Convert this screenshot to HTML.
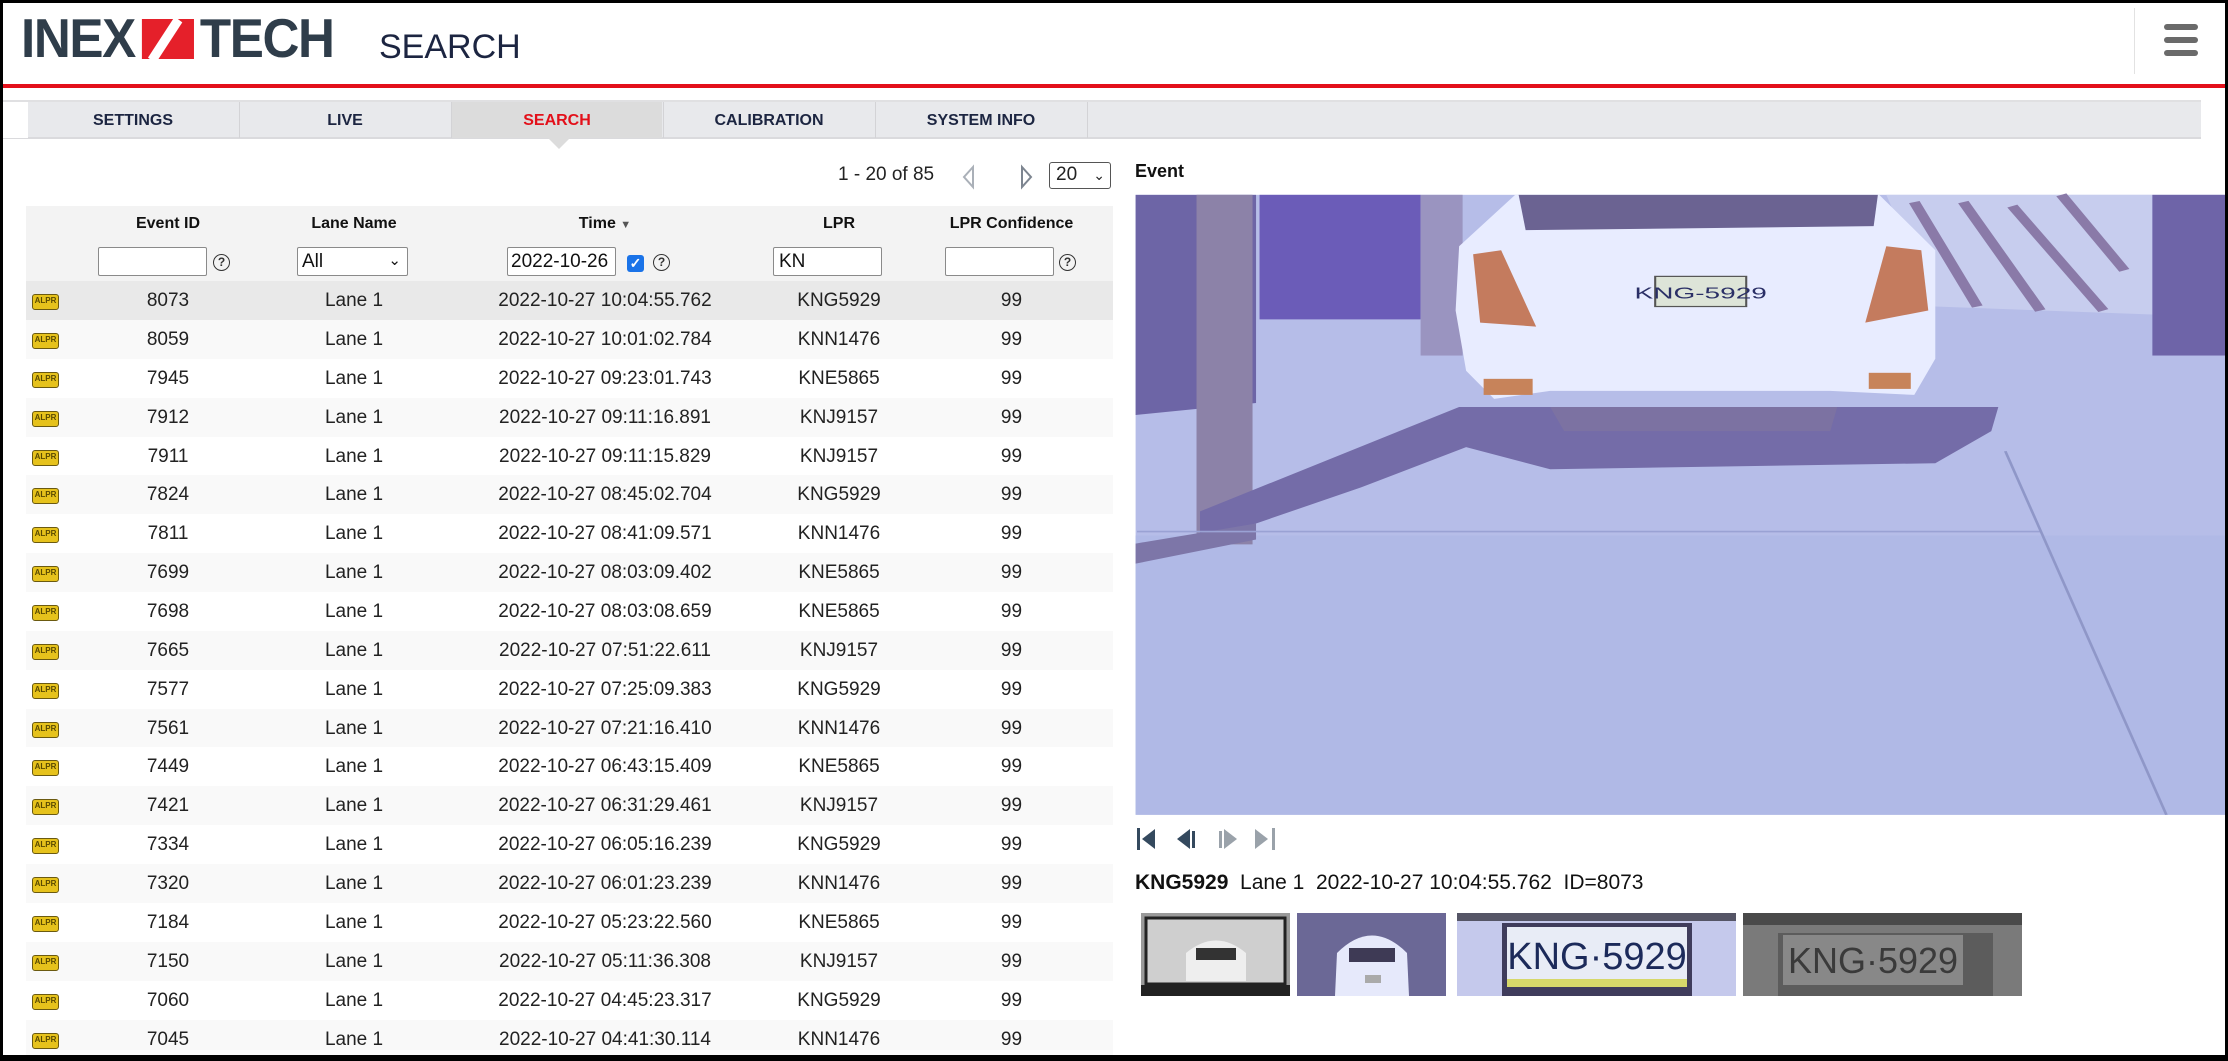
<!DOCTYPE html>
<html><head><meta charset="utf-8">
<style>
*{margin:0;padding:0;box-sizing:border-box}
body{width:2228px;height:1061px;position:relative;overflow:hidden;background:#000;font-family:"Liberation Sans",Arial,sans-serif;color:#222}
#page{position:absolute;left:3px;top:3px;width:2222px;height:1052px;background:#fff;overflow:hidden}
.a{position:absolute}
.tab{position:absolute;top:99px;height:36px;width:210px;line-height:38px;text-align:center;font-weight:bold;font-size:16px;color:#1c2541}
.hdr{position:absolute;top:212px;font-weight:bold;font-size:16px;color:#111;text-align:center}
.inp{position:absolute;top:244px;height:29px;border:1px solid #8a8a8a;border-radius:2px;background:#fff;font-size:19px;line-height:27px;padding-left:5px;color:#111}
.q{position:absolute;top:251px;width:17px;height:17px;border:1.5px solid #333;border-radius:50%;font-size:12px;line-height:14px;text-align:center;font-weight:bold;color:#333}
.row{position:absolute;left:23px;width:1087px;height:39px;font-size:19px;line-height:40px;color:#222}
.row span{position:absolute;top:0;text-align:center}
.ic{position:absolute;left:6px;top:13px;width:27px;height:16px;background:#e6c21c;border:1.5px solid #6b5a10;border-radius:3px;font-size:8px;line-height:12px;color:#5a4a00;font-weight:bold;text-align:center}
.c1{left:41px;width:202px}.c2{left:243px;width:170px}.c3{left:413px;width:332px}.c4{left:745px;width:136px}.c5{left:881px;width:209px}
</style></head><body>
<div id="page">
<div class="a" style="left:18px;top:7px;height:56px;font-weight:bold;font-size:55px;line-height:56px;color:#2f3d4a;letter-spacing:-1.5px;transform:scaleX(.93);transform-origin:left;white-space:nowrap">INEX<span style="display:inline-block;width:56px;height:40px;background:#e5202a;vertical-align:-2px;margin:0 6px 0 8px;position:relative;overflow:hidden"><span style="position:absolute;left:20px;top:-4px;width:10px;height:50px;background:#fff;transform:rotate(35deg)"></span></span>TECH</div>
<div class="a" style="left:376px;top:25px;font-size:34px;color:#1c2541;">SEARCH</div>
<div class="a" style="left:2131px;top:5px;width:1px;height:66px;background:#e2e2e2"></div>
<div class="a" style="left:2161px;top:21px;width:34px;height:6px;background:#6a6a6a;border-radius:3px"></div>
<div class="a" style="left:2161px;top:34px;width:34px;height:6px;background:#6a6a6a;border-radius:3px"></div>
<div class="a" style="left:2161px;top:47px;width:34px;height:6px;background:#6a6a6a;border-radius:3px"></div>
<div class="a" style="left:0;top:81px;width:2222px;height:4px;background:#e3101a"></div>
<div class="a" style="left:0;top:97px;width:2198px;height:39px;background:#e8e9ec;border-top:2px solid #e0e0e2;border-bottom:2px solid #dadadd"></div>
<div class="a" style="left:0;top:99px;width:25px;height:36px;background:#fff"></div>
<div class="tab" style="left:25px">SETTINGS</div>
<div class="a" style="left:236px;top:99px;width:1px;height:36px;background:#d3d3d6"></div>
<div class="tab" style="left:237px">LIVE</div>
<div class="a" style="left:448px;top:99px;width:1px;height:36px;background:#d3d3d6"></div>
<div class="tab" style="left:449px;background:#dcdcdc;color:#e3101a">SEARCH</div>
<div class="a" style="left:545px;top:135px;width:0;height:0;border-left:11px solid transparent;border-right:11px solid transparent;border-top:11px solid #dcdcdc"></div>
<div class="a" style="left:660px;top:99px;width:1px;height:36px;background:#d3d3d6"></div>
<div class="tab" style="left:661px">CALIBRATION</div>
<div class="a" style="left:872px;top:99px;width:1px;height:36px;background:#d3d3d6"></div>
<div class="tab" style="left:873px">SYSTEM INFO</div>
<div class="a" style="left:1084px;top:99px;width:1px;height:36px;background:#d3d3d6"></div>
<div class="a" style="left:835px;top:161px;font-size:19px;color:#222">1 - 20 of 85</div>
<svg class="a" style="left:955px;top:160px" width="80" height="28"><path d="M15 4 L6 14 L15 24 Z" fill="#fff" stroke="#aab0b8" stroke-width="2"/><path d="M64 4 L73 14 L64 24 Z" fill="#fff" stroke="#7d8590" stroke-width="2"/></svg>
<div class="a" style="left:1046px;top:159px;width:62px;height:27px;border:1.5px solid #555;border-radius:3px;font-size:19px;line-height:24px;padding-left:6px">20<span style="position:absolute;right:5px;top:0;font-size:14px">&#8964;</span></div>
<div class="a" style="left:23px;top:203px;width:1087px;height:78px;background:#f3f3f3"></div>
<div class="hdr" style="left:64px;width:202px">Event ID</div>
<div class="hdr" style="left:266px;width:170px">Lane Name</div>
<div class="hdr" style="left:436px;width:332px">Time <span style="font-size:11px;color:#555">&#9660;</span></div>
<div class="hdr" style="left:768px;width:136px">LPR</div>
<div class="hdr" style="left:904px;width:209px">LPR Confidence</div>
<div class="inp" style="left:95px;width:109px"></div><div class="q" style="left:210px">?</div>
<div class="inp" style="left:294px;width:111px;padding-left:4px">All<span style="position:absolute;right:6px;top:-1px;font-size:15px">&#8964;</span></div>
<div class="inp" style="left:504px;width:109px;padding-left:3px">2022-10-26</div>
<div class="a" style="left:624px;top:252px;width:17px;height:17px;background:#1a73e8;border-radius:3px;color:#fff;font-size:14px;line-height:17px;text-align:center;font-weight:bold">&#10003;</div>
<div class="q" style="left:650px">?</div>
<div class="inp" style="left:770px;width:109px">KN</div>
<div class="inp" style="left:942px;width:109px"></div><div class="q" style="left:1056px">?</div>
<div id="rows"></div>
<div class="a" style="left:1132px;top:158px;font-weight:bold;font-size:18px;color:#111">Event</div>
<svg class="a" style="left:1127px;top:187px" width="1098" height="630" viewBox="0 0 1568 1568" preserveAspectRatio="none">
<rect x="8" y="12" width="1560" height="1543" fill="#b6bde8"/>
<rect x="8" y="860" width="1560" height="695" fill="#b0b9e6"/>
<polygon points="8,12 180,12 180,530 8,560" fill="#6d65a6"/>
<rect x="185" y="12" width="230" height="310" fill="#6b5cb8"/>
<rect x="95" y="12" width="80" height="870" fill="#8c82a8"/>
<rect x="415" y="12" width="60" height="400" fill="#9a94c0"/>
<polygon points="100,800 470,540 1240,540 1230,600 1150,680 600,695 480,640 330,740 180,830 100,870" fill="#746ca8"/>
<polygon points="8,880 180,830 180,870 8,930" fill="#7d76a8"/>
<polygon points="1080,12 1460,12 1460,310 1150,290" fill="#c7cdee"/>
<g stroke="#8a7aa8" stroke-width="16"><line x1="1120" y1="30" x2="1210" y2="290"/><line x1="1190" y1="30" x2="1300" y2="300"/><line x1="1260" y1="40" x2="1390" y2="300"/><line x1="1330" y1="12" x2="1420" y2="200"/></g>
<rect x="1460" y="12" width="108" height="400" fill="#6e64a8"/>
<polygon points="470,140 550,12 1070,12 1150,150 1150,420 1120,510 1000,500 600,500 520,520 480,450 465,300" fill="#e8ecff"/>
<polygon points="555,12 1068,12 1062,90 565,100" fill="#6b6392"/>
<polygon points="490,160 530,150 580,340 500,330" fill="#c47b5e"/>
<polygon points="1080,140 1130,150 1140,300 1050,330" fill="#c47b5e"/>
<rect x="505" y="470" width="70" height="40" fill="#c7835a"/>
<rect x="1055" y="455" width="60" height="40" fill="#c7835a"/>
<polygon points="600,540 1010,540 1000,600 620,600" fill="#7c72a2"/>
<rect x="750" y="215" width="130" height="75" fill="#dde4d8" stroke="#555" stroke-width="3"/>
<text x="815" y="270" font-family="Liberation Sans" font-size="40" text-anchor="middle" fill="#2a2f66">KNG-5929</text>
<line x1="10" y1="850" x2="1300" y2="850" stroke="#9aa2d4" stroke-width="4"/>
<line x1="1250" y1="650" x2="1480" y2="1555" stroke="#8f97c8" stroke-width="4"/>
</svg>
<svg class="a" style="left:1130px;top:823px" width="150" height="26">
<rect x="4" y="2" width="3" height="22" fill="#34495e"/><path d="M9 13 L22 3 L22 23 Z" fill="#34495e"/>
<path d="M44 13 L57 3 L57 23 Z" fill="#34495e"/><rect x="59" y="5" width="3" height="17" fill="#34495e"/>
<rect x="86" y="5" width="3" height="17" fill="#9aa2aa"/><path d="M91 3 L104 13 L91 23 Z" fill="#9aa2aa"/>
<path d="M122 3 L135 13 L122 23 Z" fill="#9aa2aa"/><rect x="139" y="2" width="3" height="22" fill="#9aa2aa"/>
</svg>
<div class="a" style="left:1132px;top:868px;font-size:21px;color:#111;white-space:pre"><b>KNG5929</b>  Lane 1  2022-10-27 10:04:55.762  ID=8073</div>
<svg class="a" style="left:1138px;top:910px" width="149" height="83"><rect width="149" height="83" fill="#9a9a9a"/><rect x="5" y="5" width="139" height="66" fill="#cfcfcf" stroke="#222" stroke-width="3"/><path d="M45 40 Q75 15 105 40 L105 68 L45 68 Z" fill="#eee"/><rect x="55" y="35" width="40" height="12" fill="#333"/><rect x="0" y="72" width="149" height="11" fill="#222"/></svg>
<svg class="a" style="left:1294px;top:910px" width="149" height="83"><rect width="149" height="83" fill="#6b6896"/><path d="M40 40 Q75 5 110 40 L112 83 L38 83 Z" fill="#e6e9fb"/><rect x="52" y="35" width="46" height="14" fill="#3e3a55"/><rect x="68" y="62" width="16" height="8" fill="#aaa"/></svg>
<svg class="a" style="left:1454px;top:910px" width="279" height="83"><rect width="279" height="83" fill="#c5c9ec"/><rect x="0" y="0" width="279" height="8" fill="#556"/><rect x="45" y="10" width="190" height="73" fill="#3f3c5c"/><rect x="50" y="14" width="180" height="52" fill="#e8ecf6"/><text x="140" y="56" font-family="Liberation Sans" font-size="38" text-anchor="middle" fill="#1c2a5a">KNG·5929</text><rect x="50" y="66" width="180" height="8" fill="#d6d86a"/></svg>
<svg class="a" style="left:1740px;top:910px" width="279" height="83"><rect width="279" height="83" fill="#7a7a7a"/><rect x="0" y="0" width="279" height="12" fill="#4a4a4a"/><rect x="35" y="20" width="215" height="63" fill="#5c5c5c"/><rect x="40" y="22" width="180" height="50" fill="#888"/><text x="130" y="60" font-family="Liberation Sans" font-size="36" text-anchor="middle" fill="#3a3a3a">KNG·5929</text></svg>
</div>
<script>
var d=[["8073","2022-10-27 10:04:55.762","KNG5929"],["8059","2022-10-27 10:01:02.784","KNN1476"],["7945","2022-10-27 09:23:01.743","KNE5865"],["7912","2022-10-27 09:11:16.891","KNJ9157"],["7911","2022-10-27 09:11:15.829","KNJ9157"],["7824","2022-10-27 08:45:02.704","KNG5929"],["7811","2022-10-27 08:41:09.571","KNN1476"],["7699","2022-10-27 08:03:09.402","KNE5865"],["7698","2022-10-27 08:03:08.659","KNE5865"],["7665","2022-10-27 07:51:22.611","KNJ9157"],["7577","2022-10-27 07:25:09.383","KNG5929"],["7561","2022-10-27 07:21:16.410","KNN1476"],["7449","2022-10-27 06:43:15.409","KNE5865"],["7421","2022-10-27 06:31:29.461","KNJ9157"],["7334","2022-10-27 06:05:16.239","KNG5929"],["7320","2022-10-27 06:01:23.239","KNN1476"],["7184","2022-10-27 05:23:22.560","KNE5865"],["7150","2022-10-27 05:11:36.308","KNJ9157"],["7060","2022-10-27 04:45:23.317","KNG5929"],["7045","2022-10-27 04:41:30.114","KNN1476"]];
var h="";for(var i=0;i<20;i++){var bg=i==0?"#e9e9e9":(i%2?"#f9f9f9":"#fff");
h+='<div class="row" style="top:'+(278+i*38.87).toFixed(1)+'px;background:'+bg+'"><div class="ic">ALPR</div><span class="c1">'+d[i][0]+'</span><span class="c2">Lane 1</span><span class="c3">'+d[i][1]+'</span><span class="c4">'+d[i][2]+'</span><span class="c5">99</span></div>';}
document.getElementById("rows").innerHTML=h;
</script>
</body></html>
